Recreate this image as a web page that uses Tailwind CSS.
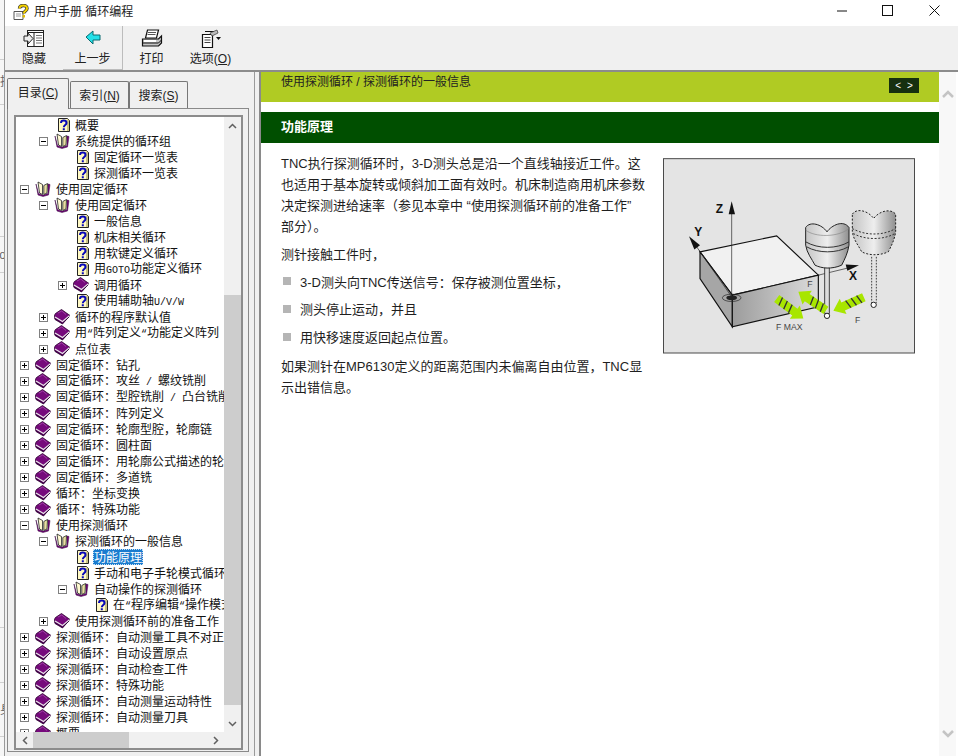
<!DOCTYPE html>
<html lang="zh">
<head>
<meta charset="UTF-8">
<title>用户手册 循环编程</title>
<script src="https://cdn.jsdelivr.net/npm/@tailwindcss/browser@4"></script>
</head>
<body class="h-[756px] w-[958px] overflow-hidden bg-white font-['Liberation_Sans','Noto_Sans_CJK_SC',sans-serif] text-[#1a1a1a]">

<!-- shared icons -->
<svg class="hidden">
  <symbol id="page" viewBox="0 0 12 16">
    <path d="M.5 1.500h9l2 2v11H.5z" fill="#fff9c4" stroke="#222"/>
    <path d="M10 2.500v11.500" stroke="#b8b070" stroke-width="1.500"/>
    <path d="M3 6C3 2.800 8.500 2.800 8.500 6 8.500 8 5.800 8 5.800 10.300M5.800 11.300v2" fill="none" stroke="#0808b8" stroke-width="2"/>
  </symbol>
  <symbol id="book" viewBox="0 0 16 16">
    <path d="M7.500 .5 16 6.500 8.500 15 1 10.500C0 8 .3 6 1.500 4.500z" fill="#760a7c" stroke="#2b002d" stroke-width=".8"/>
    <path d="M1 8 8.500 12.500 15.500 6.800" fill="none" stroke="#e8e8e8" stroke-width="1.300"/>
    <path d="M1.200 9.800 8.500 14.200 15 8" fill="none" stroke="#30003a" stroke-width=".9"/>
    <path d="M4 4 7.800 2 12 5.500" fill="none" stroke="#a94aae" stroke-width=".8"/>
  </symbol>
  <symbol id="open" viewBox="0 0 16 16">
    <path d="M1 3 3 14 8 15.500 13.500 14 15 3.500 13 3 13 12.500 8.500 14 7.500 14 3.500 12.500z" fill="#760a7c" stroke="#33003a" stroke-width=".5"/>
    <path d="M3 1 7.500 3.500V13.500L4.500 12z" fill="#fff9d0" stroke="#222" stroke-width=".8"/>
    <path d="M12.500 2.500 8.800 4.500V13.500L12 12z" fill="#e8e0a0" stroke="#222" stroke-width=".8"/>
  </symbol>
  <symbol id="plus" viewBox="0 0 9 9">
    <rect x=".5" y=".5" width="8" height="8" fill="#fff" stroke="#808080"/>
    <path d="M2 4.500h5M4.500 2v5" stroke="#000"/>
  </symbol>
  <symbol id="minus" viewBox="0 0 9 9">
    <rect x=".5" y=".5" width="8" height="8" fill="#fff" stroke="#808080"/>
    <path d="M2 4.500h5" stroke="#000"/>
  </symbol>
</svg>

<div class="flex h-full">
  <!-- sliver of the window behind -->
  <div class="flex h-full w-[5px] shrink-0 flex-col overflow-hidden border-r border-[#9a9a9a] bg-[#f6f6f6] text-[12px] leading-[14px] text-[#666]">
    <div class="h-[60px] shrink-0 border-b border-[#d0d0d0]"></div>
    <div class="flex h-[45px] shrink-0 items-center justify-end border-b border-[#d0d0d0]"><span class="-mr-[8px] shrink-0">指</span></div>
    <div class="h-[132px] shrink-0 border-b border-[#d0d0d0]"></div>
    <div class="flex h-[36px] shrink-0 items-center justify-end border-b border-[#d0d0d0]"><span class="-mr-[2px] shrink-0">o</span></div>
    <div class="h-[355px] shrink-0 border-b border-[#d0d0d0]"></div>
    <div class="h-[55px] shrink-0 border-b border-[#d0d0d0]"></div>
    <div class="flex h-[54px] shrink-0 items-center justify-end border-b border-[#d0d0d0]"><span class="-mr-[8px] shrink-0">身</span></div>
  </div>

  <div class="flex min-w-0 flex-1 flex-col">
    <!-- title bar -->
    <div class="flex h-[26px] shrink-0 items-center bg-white pb-[2px] pl-[8px]">
      <svg class="h-[16px] w-[16px]" viewBox="0 0 16 16">
        <path d="M1 7.500h9v8H1z" fill="#fff" stroke="#555"/>
        <path d="M3 10h5M3 12h5" stroke="#999"/>
        <path d="M6.500 4.500C6.500 .5 14 .5 14 4.500 14 7 10.800 7 10.800 9.500" fill="none" stroke="#333" stroke-width="3.400"/>
        <path d="M6.500 4.500C6.500 .5 14 .5 14 4.500 14 7 10.800 7 10.800 9.500" fill="none" stroke="#f2d000" stroke-width="2"/>
        <path d="M10.800 11v2.500" stroke="#e0bc00" stroke-width="2.400"/>
      </svg>
      <span class="ml-[5px] text-[12px] text-[#222]">用户手册 循环编程</span>
      <div class="-mt-[3px] ml-auto flex items-center">
        <svg class="mr-[35px] h-[10px] w-[10px]" viewBox="0 0 10 10"><path d="M0 5h10" stroke="#111"/></svg>
        <svg class="mr-[36px] h-[11px] w-[11px]" viewBox="0 0 11 11"><rect x=".5" y=".5" width="10" height="10" fill="none" stroke="#111"/></svg>
        <svg class="mr-[18px] h-[11px] w-[11px]" viewBox="0 0 11 11"><path d="M.5.5l10 10M10.500.5l-10 10" stroke="#111"/></svg>
      </div>
    </div>

    <!-- toolbar -->
    <div class="flex h-[46px] shrink-0 border-b-2 border-[#8c8c8c] bg-[#f0f0f0] text-[12px] text-[#222]">
      <div class="flex w-[58px] flex-col items-center pt-[3px]">
        <svg class="h-[20px] w-[22px]" viewBox="0 0 22 20">
          <rect x="4.500" y="1.500" width="16" height="16" fill="#fff" stroke="#222"/>
          <path d="M4.500 1.500h16v2h-16zM11 3.500v14" fill="none" stroke="#222"/>
          <path d="M13 6.500h6M13 9h6M13 11.500h6M13 14h6" stroke="#777"/>
          <path d="M1 7h4V4l5 5.500L5 15v-3H1z" fill="#eee" stroke="#222"/>
        </svg>
        <span class="mt-[2px] leading-[16px]">隐藏</span>
      </div>
      <div class="flex w-[60px] flex-col items-center border-r border-b border-[#bcbcbc] pt-[3px]">
        <svg class="h-[20px] w-[16px]" viewBox="0 0 16 20">
          <path d="M1 8 8 2v4h7v5H8v4z" fill="#22e0e8" stroke="#0a6a70"/>
        </svg>
        <span class="mt-[2px] leading-[16px]">上一步</span>
      </div>
      <div class="flex w-[57px] flex-col items-center pt-[3px]">
        <svg class="h-[20px] w-[22px]" viewBox="0 0 22 20">
          <path d="M6.500 1h11l-2 8h-11z" fill="#fff" stroke="#111" stroke-width="1.200"/>
          <path d="M7 3.500h8M6.500 5.500h8" stroke="#555"/>
          <path d="M1.500 10h16l3-3v7l-3 3h-16z" fill="#c4c4c4" stroke="#111" stroke-width="1.200"/>
          <path d="M1.500 14h16l3-3" fill="none" stroke="#111"/>
          <path d="M3 12h12" stroke="#fff" stroke-width="2"/>
        </svg>
        <span class="mt-[2px] leading-[16px]">打印</span>
      </div>
      <div class="ml-[2px] flex w-[57px] flex-col items-center pt-[3px]">
        <svg class="h-[20px] w-[22px]" viewBox="0 0 22 20">
          <path d="M2.500 5.500h10v13h-10z" fill="#fff" stroke="#111" stroke-width="1.200"/>
          <path d="M5 2.500h9v3" fill="none" stroke="#111"/>
          <path d="M4.500 8.500h6M4.500 11h6M4.500 13.500h6" stroke="#444"/>
          <path d="M10 4l7-3 1 3-6 3z" fill="#bbb" stroke="#333" stroke-width=".7"/>
          <path d="M16 8h5l-2.500 3z" fill="#111"/>
        </svg>
        <span class="mt-[2px] leading-[16px]">选项(<u>O</u>)</span>
      </div>
    </div>

    <div class="flex min-h-0 flex-1">
      <!-- left pane -->
      <div class="flex w-[250px] shrink-0 flex-col border-r border-[#9a9a9a] bg-[#f0f0f0] pl-[2px] pr-[5px]">
        <div class="flex h-[36px] shrink-0 items-end text-[12px] text-[#222]">
          <div class="relative -mb-px flex h-[31px] w-[62px] items-center justify-center rounded-t-[2px] border-x border-t border-[#777] bg-[#f0f0f0] pb-[2px]">目录(<u>C</u>)</div>
          <div class="ml-[1px] flex h-[27px] w-[59px] items-center justify-center rounded-t-[2px] border-x border-t border-[#777] bg-[#f0f0f0] pt-[1px]">索引(<u>N</u>)</div>
          <div class="flex h-[27px] w-[59px] items-center justify-center rounded-t-[2px] border-x border-t border-[#777] bg-[#f0f0f0] pt-[1px]">搜索(<u>S</u>)</div>
        </div>
        <div class="flex h-[644px] flex-col border border-[#8a8a8a] px-[6px] pt-[6px]">
          <!-- tree box -->
          <div class="flex h-[635px] w-[229px] flex-col border-2 border-[#8c8c8c] bg-white">
            <div class="flex min-h-0 flex-1">
              <div class="h-full w-[208px] overflow-hidden font-['Noto_Sans_CJK_SC',sans-serif] text-[12px] leading-[16px] text-[#111] whitespace-nowrap">
                <div class="flex h-[16px] items-center pl-[42px]"><svg class="mr-[5px] h-[16px] w-[12px] shrink-0"><use href="#page"/></svg>概要</div>
                <div class="flex h-[16px] items-center pl-[23px]"><svg class="mr-[6px] h-[9px] w-[9px] shrink-0"><use href="#minus"/></svg><svg class="mr-[5px] h-[16px] w-[16px] shrink-0"><use href="#open"/></svg>系统提供的循环组</div>
                <div class="flex h-[16px] items-center pl-[61px]"><svg class="mr-[5px] h-[16px] w-[12px] shrink-0"><use href="#page"/></svg>固定循环一览表</div>
                <div class="flex h-[16px] items-center pl-[61px]"><svg class="mr-[5px] h-[16px] w-[12px] shrink-0"><use href="#page"/></svg>探测循环一览表</div>
                <div class="flex h-[16px] items-center pl-[4px]"><svg class="mr-[6px] h-[9px] w-[9px] shrink-0"><use href="#minus"/></svg><svg class="mr-[5px] h-[16px] w-[16px] shrink-0"><use href="#open"/></svg>使用固定循环</div>
                <div class="flex h-[16px] items-center pl-[23px]"><svg class="mr-[6px] h-[9px] w-[9px] shrink-0"><use href="#minus"/></svg><svg class="mr-[5px] h-[16px] w-[16px] shrink-0"><use href="#open"/></svg>使用固定循环</div>
                <div class="flex h-[16px] items-center pl-[61px]"><svg class="mr-[5px] h-[16px] w-[12px] shrink-0"><use href="#page"/></svg>一般信息</div>
                <div class="flex h-[16px] items-center pl-[61px]"><svg class="mr-[5px] h-[16px] w-[12px] shrink-0"><use href="#page"/></svg>机床相关循环</div>
                <div class="flex h-[16px] items-center pl-[61px]"><svg class="mr-[5px] h-[16px] w-[12px] shrink-0"><use href="#page"/></svg>用软键定义循环</div>
                <div class="flex h-[16px] items-center pl-[61px]"><svg class="mr-[5px] h-[16px] w-[12px] shrink-0"><use href="#page"/></svg><span>用<span class="font-['Liberation_Mono',monospace] text-[10px]">GOTO</span>功能定义循环</span></div>
                <div class="flex h-[16px] items-center pl-[42px]"><svg class="mr-[6px] h-[9px] w-[9px] shrink-0"><use href="#plus"/></svg><svg class="mr-[5px] h-[16px] w-[16px] shrink-0"><use href="#book"/></svg>调用循环</div>
                <div class="flex h-[16px] items-center pl-[61px]"><svg class="mr-[5px] h-[16px] w-[12px] shrink-0"><use href="#page"/></svg><span>使用辅助轴<span class="font-['Liberation_Mono',monospace] text-[10px]">U/V/W</span></span></div>
                <div class="flex h-[16px] items-center pl-[23px]"><svg class="mr-[6px] h-[9px] w-[9px] shrink-0"><use href="#plus"/></svg><svg class="mr-[5px] h-[16px] w-[16px] shrink-0"><use href="#book"/></svg>循环的程序默认值</div>
                <div class="flex h-[16px] items-center pl-[23px]"><svg class="mr-[6px] h-[9px] w-[9px] shrink-0"><use href="#plus"/></svg><svg class="mr-[5px] h-[16px] w-[16px] shrink-0"><use href="#book"/></svg><span>用<span class="font-['Liberation_Mono',monospace] text-[10px]">“</span>阵列定义<span class="font-['Liberation_Mono',monospace] text-[10px]">“</span>功能定义阵列</span></div>
                <div class="flex h-[16px] items-center pl-[23px]"><svg class="mr-[6px] h-[9px] w-[9px] shrink-0"><use href="#plus"/></svg><svg class="mr-[5px] h-[16px] w-[16px] shrink-0"><use href="#book"/></svg>点位表</div>
                <div class="flex h-[16px] items-center pl-[4px]"><svg class="mr-[6px] h-[9px] w-[9px] shrink-0"><use href="#plus"/></svg><svg class="mr-[5px] h-[16px] w-[16px] shrink-0"><use href="#book"/></svg><span>固定循环<span class="font-['Noto_Sans_CJK_TC',sans-serif]">：</span>钻孔</span></div>
                <div class="flex h-[16px] items-center pl-[4px]"><svg class="mr-[6px] h-[9px] w-[9px] shrink-0"><use href="#plus"/></svg><svg class="mr-[5px] h-[16px] w-[16px] shrink-0"><use href="#book"/></svg><span>固定循环<span class="font-['Noto_Sans_CJK_TC',sans-serif]">：</span>攻丝<span class="whitespace-pre font-['Liberation_Mono',monospace] text-[10px]"> / </span>螺纹铣削</span></div>
                <div class="flex h-[16px] items-center pl-[4px]"><svg class="mr-[6px] h-[9px] w-[9px] shrink-0"><use href="#plus"/></svg><svg class="mr-[5px] h-[16px] w-[16px] shrink-0"><use href="#book"/></svg><span>固定循环<span class="font-['Noto_Sans_CJK_TC',sans-serif]">：</span>型腔铣削<span class="whitespace-pre font-['Liberation_Mono',monospace] text-[10px]"> / </span>凸台铣削</span></div>
                <div class="flex h-[16px] items-center pl-[4px]"><svg class="mr-[6px] h-[9px] w-[9px] shrink-0"><use href="#plus"/></svg><svg class="mr-[5px] h-[16px] w-[16px] shrink-0"><use href="#book"/></svg><span>固定循环<span class="font-['Noto_Sans_CJK_TC',sans-serif]">：</span>阵列定义</span></div>
                <div class="flex h-[16px] items-center pl-[4px]"><svg class="mr-[6px] h-[9px] w-[9px] shrink-0"><use href="#plus"/></svg><svg class="mr-[5px] h-[16px] w-[16px] shrink-0"><use href="#book"/></svg><span>固定循环<span class="font-['Noto_Sans_CJK_TC',sans-serif]">：</span>轮廓型腔，轮廓链</span></div>
                <div class="flex h-[16px] items-center pl-[4px]"><svg class="mr-[6px] h-[9px] w-[9px] shrink-0"><use href="#plus"/></svg><svg class="mr-[5px] h-[16px] w-[16px] shrink-0"><use href="#book"/></svg><span>固定循环<span class="font-['Noto_Sans_CJK_TC',sans-serif]">：</span>圆柱面</span></div>
                <div class="flex h-[16px] items-center pl-[4px]"><svg class="mr-[6px] h-[9px] w-[9px] shrink-0"><use href="#plus"/></svg><svg class="mr-[5px] h-[16px] w-[16px] shrink-0"><use href="#book"/></svg><span>固定循环<span class="font-['Noto_Sans_CJK_TC',sans-serif]">：</span>用轮廓公式描述的轮廓</span></div>
                <div class="flex h-[16px] items-center pl-[4px]"><svg class="mr-[6px] h-[9px] w-[9px] shrink-0"><use href="#plus"/></svg><svg class="mr-[5px] h-[16px] w-[16px] shrink-0"><use href="#book"/></svg><span>固定循环<span class="font-['Noto_Sans_CJK_TC',sans-serif]">：</span>多道铣</span></div>
                <div class="flex h-[16px] items-center pl-[4px]"><svg class="mr-[6px] h-[9px] w-[9px] shrink-0"><use href="#plus"/></svg><svg class="mr-[5px] h-[16px] w-[16px] shrink-0"><use href="#book"/></svg><span>循环<span class="font-['Noto_Sans_CJK_TC',sans-serif]">：</span>坐标变换</span></div>
                <div class="flex h-[16px] items-center pl-[4px]"><svg class="mr-[6px] h-[9px] w-[9px] shrink-0"><use href="#plus"/></svg><svg class="mr-[5px] h-[16px] w-[16px] shrink-0"><use href="#book"/></svg><span>循环<span class="font-['Noto_Sans_CJK_TC',sans-serif]">：</span>特殊功能</span></div>
                <div class="flex h-[16px] items-center pl-[4px]"><svg class="mr-[6px] h-[9px] w-[9px] shrink-0"><use href="#minus"/></svg><svg class="mr-[5px] h-[16px] w-[16px] shrink-0"><use href="#open"/></svg>使用探测循环</div>
                <div class="flex h-[16px] items-center pl-[23px]"><svg class="mr-[6px] h-[9px] w-[9px] shrink-0"><use href="#minus"/></svg><svg class="mr-[5px] h-[16px] w-[16px] shrink-0"><use href="#open"/></svg>探测循环的一般信息</div>
                <div class="flex h-[16px] items-center pl-[61px]"><svg class="mr-[4px] h-[16px] w-[12px] shrink-0"><use href="#page"/></svg><span class="bg-[#1a7ccf] px-[1px] text-white outline outline-dotted outline-[#c8e0f4] -outline-offset-1">功能原理</span></div>
                <div class="flex h-[16px] items-center pl-[61px]"><svg class="mr-[5px] h-[16px] w-[12px] shrink-0"><use href="#page"/></svg>手动和电子手轮模式循环</div>
                <div class="flex h-[16px] items-center pl-[42px]"><svg class="mr-[6px] h-[9px] w-[9px] shrink-0"><use href="#minus"/></svg><svg class="mr-[5px] h-[16px] w-[16px] shrink-0"><use href="#open"/></svg>自动操作的探测循环</div>
                <div class="flex h-[16px] items-center pl-[80px]"><svg class="mr-[5px] h-[16px] w-[12px] shrink-0"><use href="#page"/></svg><span>在<span class="font-['Liberation_Mono',monospace] text-[10px]">“</span>程序编辑<span class="font-['Liberation_Mono',monospace] text-[10px]">“</span>操作模式</span></div>
                <div class="flex h-[16px] items-center pl-[23px]"><svg class="mr-[6px] h-[9px] w-[9px] shrink-0"><use href="#plus"/></svg><svg class="mr-[5px] h-[16px] w-[16px] shrink-0"><use href="#book"/></svg>使用探测循环前的准备工作</div>
                <div class="flex h-[16px] items-center pl-[4px]"><svg class="mr-[6px] h-[9px] w-[9px] shrink-0"><use href="#plus"/></svg><svg class="mr-[5px] h-[16px] w-[16px] shrink-0"><use href="#book"/></svg><span>探测循环<span class="font-['Noto_Sans_CJK_TC',sans-serif]">：</span>自动测量工具不对正</span></div>
                <div class="flex h-[16px] items-center pl-[4px]"><svg class="mr-[6px] h-[9px] w-[9px] shrink-0"><use href="#plus"/></svg><svg class="mr-[5px] h-[16px] w-[16px] shrink-0"><use href="#book"/></svg><span>探测循环<span class="font-['Noto_Sans_CJK_TC',sans-serif]">：</span>自动设置原点</span></div>
                <div class="flex h-[16px] items-center pl-[4px]"><svg class="mr-[6px] h-[9px] w-[9px] shrink-0"><use href="#plus"/></svg><svg class="mr-[5px] h-[16px] w-[16px] shrink-0"><use href="#book"/></svg><span>探测循环<span class="font-['Noto_Sans_CJK_TC',sans-serif]">：</span>自动检查工件</span></div>
                <div class="flex h-[16px] items-center pl-[4px]"><svg class="mr-[6px] h-[9px] w-[9px] shrink-0"><use href="#plus"/></svg><svg class="mr-[5px] h-[16px] w-[16px] shrink-0"><use href="#book"/></svg><span>探测循环<span class="font-['Noto_Sans_CJK_TC',sans-serif]">：</span>特殊功能</span></div>
                <div class="flex h-[16px] items-center pl-[4px]"><svg class="mr-[6px] h-[9px] w-[9px] shrink-0"><use href="#plus"/></svg><svg class="mr-[5px] h-[16px] w-[16px] shrink-0"><use href="#book"/></svg><span>探测循环<span class="font-['Noto_Sans_CJK_TC',sans-serif]">：</span>自动测量运动特性</span></div>
                <div class="flex h-[16px] items-center pl-[4px]"><svg class="mr-[6px] h-[9px] w-[9px] shrink-0"><use href="#plus"/></svg><svg class="mr-[5px] h-[16px] w-[16px] shrink-0"><use href="#book"/></svg><span>探测循环<span class="font-['Noto_Sans_CJK_TC',sans-serif]">：</span>自动测量刀具</span></div>
                <div class="flex h-[16px] items-center pl-[4px]"><svg class="mr-[6px] h-[9px] w-[9px] shrink-0"><use href="#plus"/></svg><svg class="mr-[5px] h-[16px] w-[16px] shrink-0"><use href="#book"/></svg>概要</div>
              </div>
              <!-- vertical scrollbar -->
              <div class="flex h-full w-[17px] flex-col bg-[#f0f0f0]">
                <div class="flex h-[17px] items-center justify-center">
                  <svg class="h-[6px] w-[9px]" viewBox="0 0 9 6"><path d="M1 5 4.500 1.500 8 5" fill="none" stroke="#606060" stroke-width="1.500"/></svg>
                </div>
                <div class="h-[161px]"></div>
                <div class="h-[410px] bg-[#cdcdcd]"></div>
                <div class="flex-1"></div>
                <div class="flex h-[17px] items-center justify-center">
                  <svg class="h-[6px] w-[9px]" viewBox="0 0 9 6"><path d="M1 1 4.500 4.500 8 1" fill="none" stroke="#606060" stroke-width="1.500"/></svg>
                </div>
              </div>
            </div>
            <!-- horizontal scrollbar -->
            <div class="flex h-[16px] shrink-0 items-center bg-[#f0f0f0] text-[#606060]">
              <div class="flex h-full w-[17px] items-center justify-center">
                <svg class="h-[9px] w-[6px]" viewBox="0 0 6 9"><path d="M5 1 1.500 4.500 5 8" fill="none" stroke="#606060" stroke-width="1.500"/></svg>
              </div>
              <div class="h-full w-[96px] bg-[#cdcdcd]"></div>
              <div class="flex-1"></div>
              <div class="flex h-full w-[17px] items-center justify-center">
                <svg class="h-[9px] w-[6px]" viewBox="0 0 6 9"><path d="M1 1 4.500 4.500 1 8" fill="none" stroke="#606060" stroke-width="1.500"/></svg>
              </div>
              <div class="w-[17px]"></div>
            </div>
          </div>
        </div>
      </div>

      <!-- splitter -->
      <div class="w-[4px] shrink-0 bg-[#f0f0f0]"></div>

      <!-- right pane -->
      <div class="flex min-w-0 flex-1 border-l-2 border-[#8a8a8a]">
        <div class="w-[678px] shrink-0 bg-white">
          <div class="flex h-[30px] items-start justify-between bg-[#b0cb23] pl-[20px] pr-[20px] text-[12px] text-[#222]">
            <span class="mt-[2px] leading-[16px]">使用探测循环 / 探测循环的一般信息</span>
            <div class="mt-[6px] flex h-[15px] w-[30px] items-center justify-center gap-[6px] bg-[#16300f] text-[10px] text-white"><span>&lt;</span><span>&gt;</span></div>
          </div>
          <div class="mt-[10px] flex h-[31px] items-center bg-[#004f00] pb-[2px] pl-[20px] text-[13px] font-bold text-white">功能原理</div>
          <div class="flex pl-[20px] pt-[10px] text-[13px] leading-[21px] text-[#1f1f1f]">
            <div class="w-[382px] shrink-0">
              <p>TNC执行探测循环时，3-D测头总是沿一个直线轴接近工件。这<br>也适用于基本旋转或倾斜加工面有效时。机床制造商用机床参数<br>决定探测进给速率（参见本章中 “使用探测循环前的准备工作”<br>部分）。</p>
              <p class="mt-[7px]">测针接触工件时，</p>
              <div class="mt-[7px] flex items-center"><span class="ml-[2px] mr-[9px] h-[8px] w-[8px] -translate-y-[2px] bg-[#b5b5b5]"></span>3-D测头向TNC传送信号：保存被测位置坐标，</div>
              <div class="mt-[6px] flex items-center"><span class="ml-[2px] mr-[9px] h-[8px] w-[8px] -translate-y-[1px] bg-[#b5b5b5]"></span>测头停止运动，并且</div>
              <div class="mt-[7px] flex items-center"><span class="ml-[2px] mr-[9px] h-[8px] w-[8px] -translate-y-[1px] bg-[#b5b5b5]"></span>用快移速度返回起点位置。</div>
              <p class="mt-[8px]">如果测针在MP6130定义的距离范围内未偏离自由位置，TNC显<br>示出错信息。</p>
            </div>
            <!-- probing diagram -->
            <svg class="mt-[4px] h-[197px] w-[252px] shrink-0" viewBox="24 21 756 590">
              <defs>
                <linearGradient id="head" x1="0" x2="1"><stop offset="0" stop-color="#c4c4c4"/><stop offset=".5" stop-color="#eee"/><stop offset="1" stop-color="#8f8f8f"/></linearGradient>
                <linearGradient id="side" x1="0" x2="1" y2="0"><stop offset="0" stop-color="#9c9c9c"/><stop offset="1" stop-color="#dcdcdc"/></linearGradient>
                <symbol id="arrow" viewBox="0 0 100 50" overflow="visible">
                  <path d="M0 25 32 0V12L100 12V38L32 38V50z" fill="#a8e600"/>
                  <path d="M46 12 52 38M64 12 70 38M82 12 88 38" stroke="#333" stroke-width="4"/>
                </symbol>
              </defs>
              <rect x="25.500" y="25.500" width="753" height="583" fill="#e4e4e4" stroke="#4a4a4a" stroke-width="3"/>
              <path d="M135 305 365 257 490 375 232 435z" fill="#f1f1f1" stroke="#111" stroke-width="3.500"/>
              <path d="M135 305 232 435V530L135 385z" fill="#a6a6a6" stroke="#111" stroke-width="3.500"/>
              <path d="M232 435 490 375V470L232 530z" fill="url(#side)" stroke="#111" stroke-width="3.500"/>
              <path d="M230 440V185" stroke="#222" stroke-width="2"/>
              <path d="M230 153 240 192H221z" fill="#111"/>
              <path d="M230 440 125 290" stroke="#222" stroke-width="2"/>
              <path d="M102 258 135 285 118 298z" fill="#111"/>
              <path d="M490 375 585 352" stroke="#222" stroke-width="2"/>
              <path d="M612 345 572 343 577 362z" fill="#111"/>
              <ellipse cx="230" cy="443" rx="28" ry="11" fill="none" stroke="#222" stroke-width="2"/>
              <ellipse cx="230" cy="443" rx="16" ry="7" fill="#222"/>
              <text x="182" y="188" font-size="36" font-weight="700" fill="#111">Z</text>
              <text x="118" y="258" font-size="36" font-weight="700" fill="#111">Y</text>
              <text x="582" y="390" font-size="36" font-weight="700" fill="#111">X</text>
              <text x="457" y="412" font-size="26" fill="#444">F</text>
              <text x="600" y="520" font-size="26" fill="#444">F</text>
              <text x="363" y="540" font-size="26" fill="#444">F MAX</text>
              <!-- solid probe -->
              <path d="M509 350H523V490H509z" fill="#ddd" stroke="#222" stroke-width="2.500"/>
              <circle cx="516" cy="497" r="8" fill="#fff" stroke="#222" stroke-width="3"/>
              <path d="M452 232C465 212 500 222 516 245 530 225 565 208 582 232V285C578 310 570 325 560 345 530 358 500 355 480 345 470 325 456 310 452 285z" fill="url(#head)" stroke="#222" stroke-width="3"/>
              <path d="M452 240C480 262 550 262 582 235" fill="none" stroke="#888" stroke-width="2"/>
              <path d="M452 275C490 297 545 297 582 275M455 290C490 310 545 310 580 290" fill="none" stroke="#333" stroke-width="3"/>
              <!-- dashed probe -->
              <path d="M650 320V458M664 320V458" stroke="#222" stroke-width="2.500" stroke-dasharray="5 4" fill="none"/>
              <circle cx="656" cy="464" r="8" fill="#fff" stroke="#222" stroke-width="3"/>
              <path d="M592 192C605 172 640 182 656 205 670 185 705 172 722 192V245C718 270 710 285 700 305 670 318 640 315 620 305 610 285 596 270 592 245z" fill="url(#head)" stroke="#222" stroke-width="3" stroke-dasharray="6 5"/>
              <path d="M592 235C630 257 685 257 722 235M595 250C630 270 685 270 720 250" fill="none" stroke="#333" stroke-width="3" stroke-dasharray="6 5"/>
              <!-- feed arrows -->
              <use href="#arrow" width="100" height="50" transform="translate(525 459) rotate(-24)"/>
              <use href="#arrow" width="100" height="50" transform="translate(444 404) rotate(34)"/>
              <use href="#arrow" width="100" height="50" transform="translate(430 525) rotate(217)"/>
            </svg>
          </div>
        </div>
        <!-- content scrollbar -->
        <div class="flex w-[17px] shrink-0 flex-col items-center justify-between bg-[#f8f8f8] py-[18px]">
          <svg class="h-[8px] w-[12px]" viewBox="0 0 12 8"><path d="M1 7 6 2l5 5" fill="none" stroke="#c4c4c4" stroke-width="2.500"/></svg>
          <svg class="h-[8px] w-[12px]" viewBox="0 0 12 8"><path d="M1 1l5 5 5-5" fill="none" stroke="#c4c4c4" stroke-width="2.500"/></svg>
        </div>
      </div>
    </div>
  </div>
</div>
</body>
</html>
